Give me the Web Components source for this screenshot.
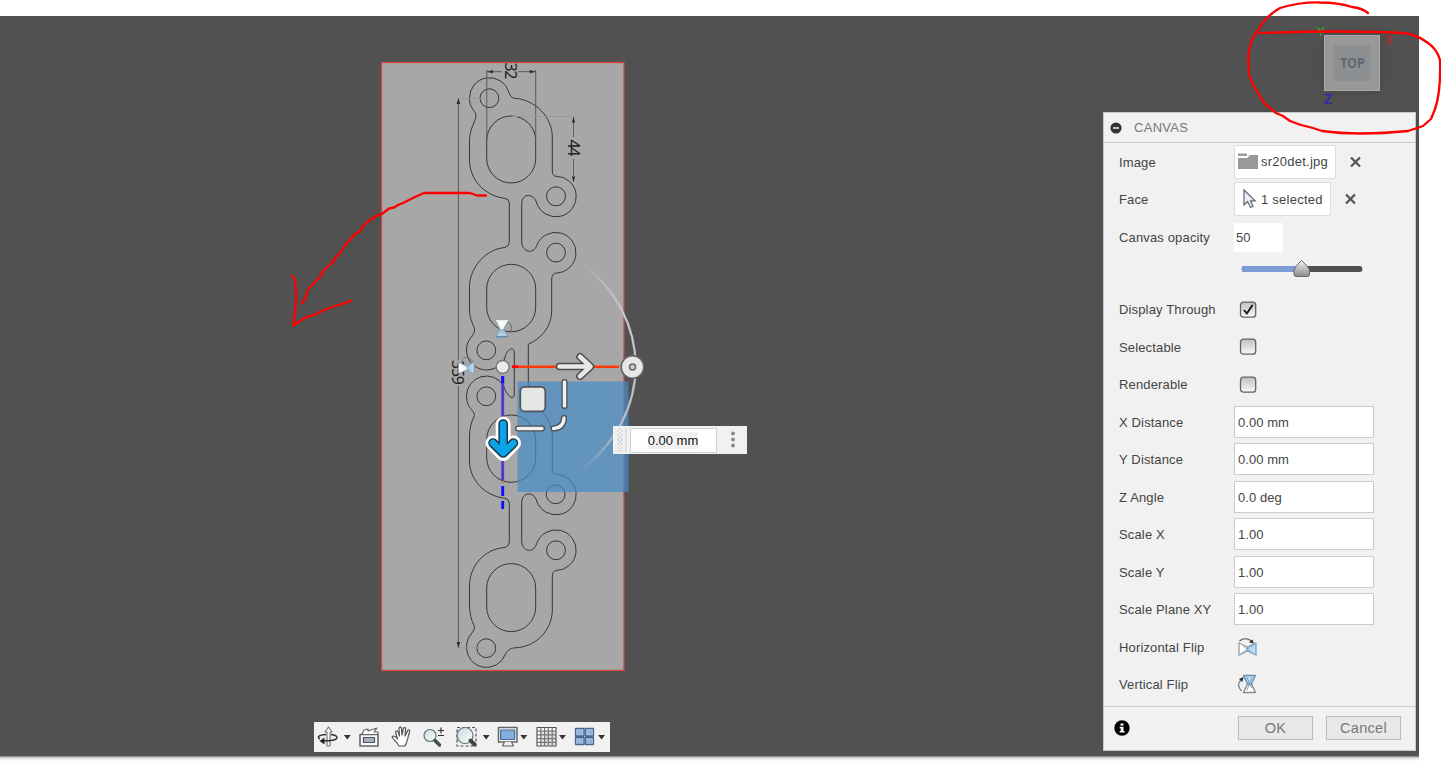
<!DOCTYPE html>
<html lang="en">
<head>
<meta charset="utf-8">
<title>Canvas</title>
<style>
html,body{margin:0;padding:0;background:#fff;overflow:hidden}
body{font-family:"Liberation Sans",Arial,sans-serif;font-size:13px;color:#444}
</style>
</head>
<body>
<cad-app></cad-app>
<script>
function define(name, markup) {
  customElements.define(name, class extends HTMLElement {
    constructor() {
      super();
      const t = document.createElement('template');
      t.innerHTML = typeof markup === 'function' ? markup(this) : markup;
      this.attachShadow({mode: 'open'}).appendChild(t.content.cloneNode(true));
    }
  });
}

/* Gasket drawing placed on the model face */
define('gasket-sketch', `
<style>:host{display:block}svg{display:block}</style>
<svg width="1441" height="761" viewBox="0 0 1441 761">
  <rect x="381.5" y="62.5" width="242.5" height="608" fill="#a7a7a7" stroke="#d24444" stroke-width="1.3"/>
  <g fill="none" stroke="#363636" stroke-width="1">
    <path d="M475.3 112.5C471 108 469.5 103 469.5 98A20 20 0 0 1 508.5 91.5Q510.500 98 514.700 98.300C535 99.500 552.300 117 552.300 137V171Q552.500 176 556 176.200A20.300 20.300 0 1 1 536.700 203C534 193 521.700 192.500 521.700 204V242C522 252 533.500 255 536.700 245.500A20.300 20.300 0 1 1 556.500 273Q552 273 551.700 279V311C551.500 328 540 339 528.300 344.300V402C540 407 552 419 552.300 436V469Q552.500 474 556 474.200A20.300 20.300 0 1 1 536.700 501C534 491 521.700 491.500 521.700 503V541C522 552 533.500 554 536.700 543.500A20.300 20.300 0 1 1 556 570.500Q552.200 571 552.300 577V611C551.500 632 534 647.500 515 647.800Q508 648 505 655A20 20 0 0 1 466.500 648C466.500 634 474.500 634 474.500 626.500Q469.500 617 469.500 605V585C470 567 483 549 505 547.500Q509 546.500 509.300 542V503Q509 499 505 498.300C484 496 469.500 479 469.500 461V437Q469.500 425 474.500 415.500C474.500 410 466.500 409 466.500 396A20 20 0 0 1 503.500 385.500C505 391 509 397.500 512 397.500Q514.300 397.500 514.300 394V352C514 346.500 507 348 504.800 358C503 365 494 370 486.500 370A20 20 0 0 1 466.500 350C466.500 338 474.500 337 474.500 330C474.500 325 469.500 322 469.500 308V286C470 267 486 249 505 247.500Q509 246.500 509.300 242V203Q509 199 505 198.300C484 196 469.500 179 469.500 160V141C469.500 129 475.500 121 475.800 117Q476 114 475.300 112.500Z"/>
    <rect x="486.700" y="116" width="49" height="67" rx="24.500"/>
    <rect x="486.700" y="264.300" width="49" height="67.500" rx="24.500"/>
    <rect x="486.700" y="415" width="49" height="67.300" rx="24.500"/>
    <rect x="486.700" y="563.600" width="49" height="68" rx="24.500"/>
    <circle cx="489.400" cy="98.200" r="9.400"/><circle cx="556" cy="196.300" r="9.500"/>
    <circle cx="556" cy="252.600" r="9.400"/><circle cx="486.300" cy="350.300" r="9.400"/>
    <circle cx="486.300" cy="396.300" r="9.400"/><circle cx="555.600" cy="494.300" r="9.400"/>
    <circle cx="556" cy="550.300" r="9.400"/><circle cx="486.300" cy="648.200" r="9.400"/>
  </g>
  <g stroke="#555" stroke-width=".9" fill="none">
    <path d="M458.400 98V360M458.400 386V648M486.800 70V140M535.700 70V140M487 71.700H502M518 71.700H536M573.500 117V137M573.500 159V182"/>
    <path stroke="#989898" d="M458 98.500H489M512 116.500H574M458 647.700H486"/>
  </g>
  <path fill="#2b2b2b" d="M458.400 98l-1.800 6h3.600zM458.400 648l-1.800-6h3.600zM487 71.700l6-1.600v3.200zM535.700 71.700l-6-1.600v3.200zM573.500 117l-1.600 5.500h3.200zM573.500 182l-1.600-5.500h3.200z"/>
  <g font-family="Noto Sans,sans-serif" font-size="16" fill="#222">
    <text transform="translate(504.700 62.500) rotate(90)" textLength="17">32</text>
    <text transform="translate(568 139.500) rotate(90)" textLength="17">44</text>
    <text transform="translate(451.800 360) rotate(90)" textLength="25">359</text>
  </g>
</svg>`);

/* Move / rotate / flip handles */
define('transform-gizmo', `
<style>:host{display:block}svg{display:block}</style>
<svg width="1441" height="761" viewBox="0 0 1441 761">
  <defs>
    <linearGradient id="arc" x1="0" y1="264" x2="0" y2="472" gradientUnits="userSpaceOnUse">
      <stop offset="0" stop-color="#ddd" stop-opacity="0"/><stop offset=".25" stop-color="#c8c8c8"/>
      <stop offset=".8" stop-color="#b4bcc4"/><stop offset="1" stop-color="#bbb" stop-opacity="0"/>
    </linearGradient>
    <linearGradient id="gl" x1="0" y1="0" x2="0" y2="1"><stop offset="0" stop-color="#fff"/><stop offset=".5" stop-color="#f2f6f8"/><stop offset=".55" stop-color="#8fb9d4"/><stop offset="1" stop-color="#c8e4f6"/></linearGradient>
    <linearGradient id="gh"><stop offset="0" stop-color="#fff"/><stop offset=".5" stop-color="#f2f6f8"/><stop offset=".55" stop-color="#8fb9d4"/><stop offset="1" stop-color="#c8e4f6"/></linearGradient>
  </defs>
  <rect x="517.500" y="381.500" width="111" height="110.500" fill="#458bc7" fill-opacity=".7"/>
  <path d="M581 263C652 315 657 415 577 473" fill="none" stroke="url(#arc)" stroke-width="2.200"/>
  <path d="M512 366.800H619" stroke="#ff3a08" stroke-width="2.600"/>
  <path d="M512 366.800h6" stroke="#f00" stroke-width="2.600"/>
  <path d="M502.700 376V480" stroke="#5038c8" stroke-width="2.900"/>
  <path d="M502.700 376v7M502.700 486v10M502.700 501v8" stroke="#1010ff" stroke-width="2.900"/>
  <path d="M502.700 481v3" stroke="#b18f83" stroke-width="2.500"/>
  <g fill="none" stroke-linecap="round" stroke-linejoin="round">
    <path d="M559.500 366.500H590M580 356.800L590.500 366.500L580 376.200" stroke="#4c4c4c" stroke-width="7.600"/>
    <path d="M559.500 366.500H590M580 356.800L590.500 366.500L580 376.200" stroke="#e5e7e8" stroke-width="4.600"/>
    <path d="M564.500 382V406M518 428.400H542M553.500 428.400Q563.500 428 564 418" stroke="#4b4b4b" stroke-width="6"/>
    <path d="M564.500 382V406M518 428.400H542M553.500 428.400Q563.500 428 564 418" stroke="#f0f0f0" stroke-width="3.500"/>
    <path d="M503.200 424V453M493 443L503.200 453.500L513.500 443" stroke="#fff" stroke-width="15"/>
    <path d="M503.200 424V452M493 443L503.200 453L513.500 443" stroke="#17384c" stroke-width="9.600"/>
    <path d="M503.200 424V452M493 443L503.200 453L513.500 443" stroke="#0aa4e8" stroke-width="6.600"/>
  </g>
  <rect x="520.300" y="386.800" width="25" height="24.600" rx="4.500" fill="#e4e5e5" stroke="#505458" stroke-width="1.700"/>
  <circle cx="502.700" cy="367" r="6.500" fill="#ececec" stroke="#777" stroke-width="1.400"/>
  <circle cx="632.500" cy="367" r="11.300" fill="#e7e7e7" stroke="#606060" stroke-width="1.500"/>
  <circle cx="632.500" cy="367" r="3" fill="#ccc" stroke="#666" stroke-width="1.500"/>
  <path d="M507 321c5 3 6 8 2 12" fill="none" stroke="#666"/>
  <path d="M496 320.500h12l-4.200 8.500 4.200 8h-12l3.700-8z" fill="url(#gl)" stroke="#8296a3" stroke-width=".9"/>
  <path d="M496 320.800h12" stroke="#eee" stroke-width="1.500"/>
  <path d="M496 336.500h12" stroke="#588fb6" stroke-width="1.300"/>
  <path d="M462 359c4-3 9-1 11 3" fill="none" stroke="#777"/>
  <path d="M458.500 362.500l8.500 3.800 7-4.300v12l-7-4-8.500 3.500z" fill="url(#gh)" stroke="#7d9bb0" stroke-width=".9"/>
</svg>`);

/* View cube, axis letters */
define('view-cube', `
<style>
:host{display:block;position:relative;width:56px;height:56px}
.f{box-sizing:border-box;width:56px;height:56px;background:#989898;border:1px solid #a9a9a9;display:grid;place-items:center;box-shadow:0 0 9px #3e3e3e88}
.c{width:36px;height:36px;background:#8d9092;display:grid;place-items:center;font:bold 15px/32px "Noto Sans",sans-serif;color:#636870;letter-spacing:-.2px}
.c span{transform:translateY(-1px) scaleX(.85)}
.a{position:absolute;font:13px/13px "Noto Sans",sans-serif;-webkit-text-stroke:.4px currentColor}
</style>
<div class="f"><div class="c"><span>TOP</span></div></div>
<span class="a" style="left:-7px;top:-10px;color:#2ca32c">Y</span>
<span class="a" style="left:61px;top:-2px;color:#b02b2b">X</span>
<span class="a" style="left:0;top:57px;color:#2c2ca9;font-size:15px">Z</span>`);

/* Floating value box next to the gizmo */
define('value-box', `
<style>
:host{display:flex;align-items:center;width:134px;height:28px;background:#f1f1f1;color:#111}
.g{width:6px;height:24px;margin-left:4px;background:repeating-linear-gradient(45deg,#ddd 0 1px,transparent 1px 3px),repeating-linear-gradient(-45deg,#ddd 0 1px,transparent 1px 3px);border-right:0}
.s{width:2px;height:24px;margin-left:2px;background:#ddd}
.v{box-sizing:border-box;width:87px;height:25px;margin-left:3px;border:1px solid #cfcfcf;background:#fff;display:grid;place-items:center;font-size:13px}
.v span{background:#f1f1f1;line-height:17px;margin-right:1px}
svg{margin-left:13px}
</style>
<div class="g"></div><div class="s"></div><div class="v"><span>0.00 mm</span></div>
<svg width="6" height="20"><g fill="#888"><circle cx="3" cy="3.500" r="1.900"/><circle cx="3" cy="9.500" r="1.900"/><circle cx="3" cy="15.500" r="1.900"/></g></svg>`);

/* Navigation toolbar */
define('nav-bar', `
<style>:host{display:block;width:296px;height:30px;background:#f1f1f1}svg{display:block}</style>
<svg width="296" height="30" viewBox="314 722 296 30" fill="none" stroke="#4d535a" stroke-width="1.200" stroke-linejoin="round">
  <defs><linearGradient id="lens" x1="0" y1="0" x2="1" y2="1"><stop offset="0" stop-color="#c5dcdc"/><stop offset="1" stop-color="#fafefe"/></linearGradient></defs>
  <path d="M343.800 735h7l-3.500 4.500zM482.700 735h7l-3.500 4.500zM520.300 735h7l-3.500 4.500zM559 735h7l-3.500 4.500zM598 735h7l-3.500 4.500z" fill="#333" stroke="none"/>
  <path d="M327 746v-14h-2l3.500-5 3.500 5h-2v14z" fill="#fff" stroke="#777"/>
  <path d="M326 734.500c-8 .5-9 3-6 4.500M331 734.500c8 1 8 5 0 6-3 .5-6 .3-9 0" stroke="#333" stroke-width="1.500"/>
  <path d="M319.500 741l5-3.500v7z" fill="#222" stroke="none"/>
  <path d="M360 734.500h18v11.500h-18z" fill="#fafafa" stroke="#666" stroke-width="1.600"/>
  <path d="M362 734l2-4 4-1v2l9-3-3 4h4v2" fill="#fff" stroke="#666"/>
  <path d="M363.500 737.500h11v5h-11z" fill="#aab3bd"/>
  <path d="M399 746c-2-4-5-6-7-9 2-2 4 0 5.500 2l-2-7c1-2 2.500-1 3 1l1 3-.5-8c1-1.500 2.500-1 2.500.5l.5 6.500 1.500-7c1.500-1 2.500 0 2 1.500l-.5 6.500 3-6c1.500-.5 2 .5 1.500 2-1.500 5-2.500 11-4.500 14z" fill="#fff" stroke="#555"/>
  <circle cx="430" cy="735.500" r="6" fill="url(#lens)" stroke="#67727a"/>
  <path d="M435 740.500l4.500 4.500" stroke="#454c52" stroke-width="3.500" stroke-linecap="round"/>
  <path d="M438 730.500h6M441 727.500v6M438 735.500h6" stroke="#333"/>
  <path d="M457 727.500h19v18.500h-19z" stroke="#555" stroke-dasharray="3 2"/>
  <circle cx="465" cy="735.500" r="8" fill="url(#lens)" stroke="#67727a"/>
  <path d="M470.500 740.500l4 4" stroke="#444" stroke-width="4" stroke-linecap="round"/>
  <path d="M498.500 727.500h18.500v14.500h-18.500z" fill="#f7f7f7" stroke="#666" stroke-width="1.500"/>
  <path d="M500.700 730h14v9.500h-14z" fill="#86aedd" stroke="#406c9f"/>
  <path d="M504.500 742l-2 4h11l-2-4" fill="#eee" stroke="#666"/>
  <path d="M537 727.500h19v18.500h-19z" fill="#fafafa" stroke="#555"/>
  <path d="M540.800 728v18M544.600 728v18M548.400 728v18M552.200 728v18M537 731.200h19M537 734.900h19M537 738.600h19M537 742.300h19" stroke="#777" stroke-width="1.200"/>
  <path d="M540 732h16v14h-16z" fill="#777" fill-opacity=".2" stroke="none"/>
  <g fill="#a9c5e8" stroke="#4b6790" stroke-width="1.300"><path d="M575.500 728.500h8.500v7.500h-8.500zM585.500 728.500h8v7.500h-8zM575.500 737.500h8.500v7h-8.500zM585.500 737.500h8v7h-8z"/><path stroke="#7fa1cd" stroke-width=".8" d="M578 731h3.500v2.500h-3.500zM588 731h3.500v2.500h-3.500zM578 740h3.500v2.500h-3.500zM588 740h3.500v2.500h-3.500z"/></g>
</svg>`);

/* Form parts */
define('form-row', el => `
<style>
:host{display:flex;height:37.5px;align-items:center;letter-spacing:.15px}
label{width:115px;padding-left:15px;padding-top:2px;white-space:nowrap;line-height:16px}
.v{display:flex;align-items:center}
</style><label>${el.getAttribute('label') || ''}</label><div class="v"><slot></slot></div>`);
define('text-field', `
<style>:host{box-sizing:border-box;display:flex;align-items:center;width:140px;height:32px;padding:1px 0 0 3px;border:1px solid #ccc;background:#fff;letter-spacing:.05px}
:host([small]){width:49px;height:29px;border:0;padding-left:2px;margin-top:1px}</style><slot></slot>`);
define('pick-box', el => `
<style>:host{display:flex;align-items:center}
.b{box-sizing:border-box;height:34px;border:1.500px solid #dcdcdc;border-radius:2px;background:#fff;display:flex;align-items:center;padding:0 6px 0 3px;width:${el.getAttribute('w')}px;white-space:nowrap;letter-spacing:.25px}
.b svg{width:21px;height:22px;margin-right:2px;flex:none}.x{margin-left:13px}</style>
<div class="b">${el.getAttribute('icon') === 'folder'
  ? '<svg viewBox="0 0 21 22"><path d="M0 2.500h9v2.500h-9zM0 7h9l3-3h8v14h-20z" fill="#999"/></svg>'
  : '<svg viewBox="0 0 21 22"><path d="M6 2v15l3.500-3.500 3 6 2.500-1.300-2.500-5.400h4.700z" fill="#eceef3" stroke="#606672" stroke-width="1.200"/></svg>'}
<slot></slot></div>
<svg class="x" width="14" height="14"><path d="M2 2.500l9 9m0-9l-9 9" stroke="#555" stroke-width="2.300"/></svg>`);
define('check-box', el => `
<style>:host{display:block;margin:1px 0 0 5px}svg{display:block}</style>
<svg width="18" height="18"><defs><linearGradient id="g" x1="0" y1="0" x2="0" y2="1"><stop offset="0" stop-color="#bfbfbf"/><stop offset="1" stop-color="#fafafa"/></linearGradient></defs>
<rect x="1.500" y="1.200" width="15.200" height="15" rx="3" fill="url(#g)" stroke="#626262" stroke-width="1.300"/>
${el.hasAttribute('checked') ? '<path d="M5 9l2.800 3.500L13.600 4" fill="none" stroke="#111" stroke-width="1.900"/>' : ''}</svg>`);
define('opacity-slider', `
<style>:host{display:block;margin:-9px 0 0 7px}svg{display:block}</style>
<svg width="122" height="20"><defs><linearGradient id="g" x1="0" y1="0" x2="0" y2="1"><stop offset="0" stop-color="#f5f5f5"/><stop offset="1" stop-color="#888"/></linearGradient></defs>
<rect x="0.800" y="7" width="120.500" height="6" rx="2.500" fill="#505050"/><path d="M60 7H3a2.200 2.200 0 0 0-2.200 2.200v1.600A2.200 2.200 0 0 0 3 13h57z" fill="#7d9bd5"/>
<path d="M60.500 1.500Q68.500 8.500 68.500 12v3Q68.500 17.500 66.500 17.500H55Q53 17.500 53 15V12Q53 8.500 60.500 1.500z" fill="url(#g)" stroke="#666"/></svg>`);
define('flip-icon', el => `
<style>:host{display:block;margin:1px 0 0 3px}svg{display:block}</style>
<svg width="21" height="21" viewBox="0 0 21 21" stroke-linejoin="round">
${el.getAttribute('dir') === 'h'
  ? '<path d="M2 6l8.500 4v4L2 18z" fill="#fff" stroke="#999" stroke-width="1.300"/><path d="M10.500 10L19 6v12l-8.500-4z" fill="#bcdcf1" stroke="#6fa2c8" stroke-width="1.300"/><path d="M2 18l16-11M6 9l10 7" stroke="#85aeca"/><path d="M2.500 4Q8-.5 14.500 4" fill="none" stroke="#555" stroke-width="1.200"/><path d="M17 6.500l-5-1 3.500-3z" fill="#333"/>'
  : '<path d="M6.500 1.500h12l-4 8.500h-4z" fill="#bcdcf1" stroke="#6792b2" stroke-width="1.300"/><path d="M10.500 10h4l4 8.500h-12z" fill="#fff" stroke="#888" stroke-width="1.300"/><path d="M9.500 3l3 6 3-6M10 16l2.500-6 2.500 4" fill="none" stroke="#6b9cc0"/><path d="M4.500 17Q-1 11 4 6" fill="none" stroke="#777" stroke-width="1.200"/><path d="M6.500 3l-1 5-3.500-3z" fill="#333"/>'}
</svg>`);
define('push-button', `
<style>:host{box-sizing:border-box;display:grid;place-items:center;width:75px;height:24px;border:1px solid #bbb;background:#e8e8e8;color:#777;font-size:14.500px;letter-spacing:.3px;line-height:20px}</style><span><slot></slot></span>`);

define('canvas-panel', `
<style>
:host{box-sizing:border-box;display:flex;flex-direction:column;width:313px;height:639px;border:1px solid #c9c9c9;background:#f1f1f1}
header{box-sizing:border-box;height:30px;display:flex;align-items:center;gap:12px;padding-left:6px;border-bottom:1px solid #c9c9c9;color:#777;letter-spacing:.3px;font-size:13px}
.rows{height:562.500px}
.sl{display:flex;height:35px;align-items:center;padding-left:130px}
footer{flex:1;display:flex;align-items:center;border-top:1px solid #ccc;padding:0 14px 0 10px}
footer svg{margin-right:auto}push-button+push-button{margin-left:13px}
</style>
<header><svg width="12" height="12"><circle cx="6" cy="6" r="5.600" fill="#333"/><path d="M3 6h6" stroke="#fff" stroke-width="1.400"/></svg><span>CANVAS</span></header>
<div class="rows">
<form-row label="Image"><pick-box icon="folder" w="102">sr20det.jpg</pick-box></form-row>
<form-row label="Face"><pick-box icon="cursor" w="97">1 selected</pick-box></form-row>
<form-row label="Canvas opacity"><text-field small>50</text-field></form-row>
<div class="sl"><opacity-slider></opacity-slider></div>
<form-row label="Display Through"><check-box checked></check-box></form-row>
<form-row label="Selectable"><check-box></check-box></form-row>
<form-row label="Renderable"><check-box></check-box></form-row>
<form-row label="X Distance"><text-field>0.00 mm</text-field></form-row>
<form-row label="Y Distance"><text-field>0.00 mm</text-field></form-row>
<form-row label="Z Angle"><text-field>0.0 deg</text-field></form-row>
<form-row label="Scale X"><text-field>1.00</text-field></form-row>
<form-row label="Scale Y"><text-field>1.00</text-field></form-row>
<form-row label="Scale Plane XY"><text-field>1.00</text-field></form-row>
<form-row label="Horizontal Flip"><flip-icon dir="h"></flip-icon></form-row>
<form-row label="Vertical Flip"><flip-icon dir="v"></flip-icon></form-row>
</div>
<footer><svg width="16" height="16"><circle cx="8" cy="8" r="7.700" fill="#000"/><path d="M6.500 3.500h3v2h-3zM5.700 6.700h3.800v4.300h1v1.500H5.700V11h1V8.200h-1z" fill="#fff"/></svg><push-button>OK</push-button><push-button>Cancel</push-button></footer>`);

/* Freehand red annotations */
define('ink-marks', `
<style>:host{display:block}svg{display:block}</style>
<svg width="1441" height="761" fill="none" stroke="#f00" stroke-width="2.300" stroke-linecap="round" stroke-linejoin="round">
<path d="M486 195.500H477L470 193H458 424L415 197 403 203 399 204.500 394 207.500 389 208.500 382 214 376 216 370 220 363 226 360.500 231 355 234 350 240 345 245 340 253 336 257 332 263 323 271 320 277 310 287 307 292 305 299 302 303"/>
<path d="M292 275.500Q296 277 296 291V305L293 325.500M293 325.500L300 321 306 317 314 315 322 311 332 307 342 304 351.500 300.500"/>
<path d="M1368 13Q1362 8 1352 7 1338 2.500 1320 2.500 1300 2 1280 8 1266 16 1258 30C1247 43 1248 60 1249 73 1250 84 1259 93 1264 103L1276 113 1283 116 1290 121 1301 125 1313 128 1322 131Q1358 136 1408 131L1423 126 1431 119 1435 109Q1441 92 1440 60 1437 49 1428 43 1416 34 1403 33Q1345 30 1259 33"/>
</svg>`);

define('cad-app', `
<style>
:host{display:block;position:relative;width:1441px;height:761px;overflow:hidden;background:#fff}
.stage{position:absolute;left:0;top:16px;width:1419px;height:741px;background:#515151}
.edge{position:absolute;left:0;top:756px;width:1419px;height:5px;background:linear-gradient(#777,#ddd 40%,#fff)}
.layer{position:absolute;left:0;top:0}
</style>
<div class="stage"></div><div class="edge"></div>
<gasket-sketch class="layer"></gasket-sketch>
<transform-gizmo class="layer"></transform-gizmo>
<value-box class="layer" style="left:613px;top:426px"></value-box>
<nav-bar class="layer" style="left:314px;top:722px"></nav-bar>
<view-cube class="layer" style="left:1324px;top:35px"></view-cube>
<canvas-panel class="layer" style="left:1103px;top:112px"></canvas-panel>
<ink-marks class="layer"></ink-marks>`);
</script>
</body>
</html>
